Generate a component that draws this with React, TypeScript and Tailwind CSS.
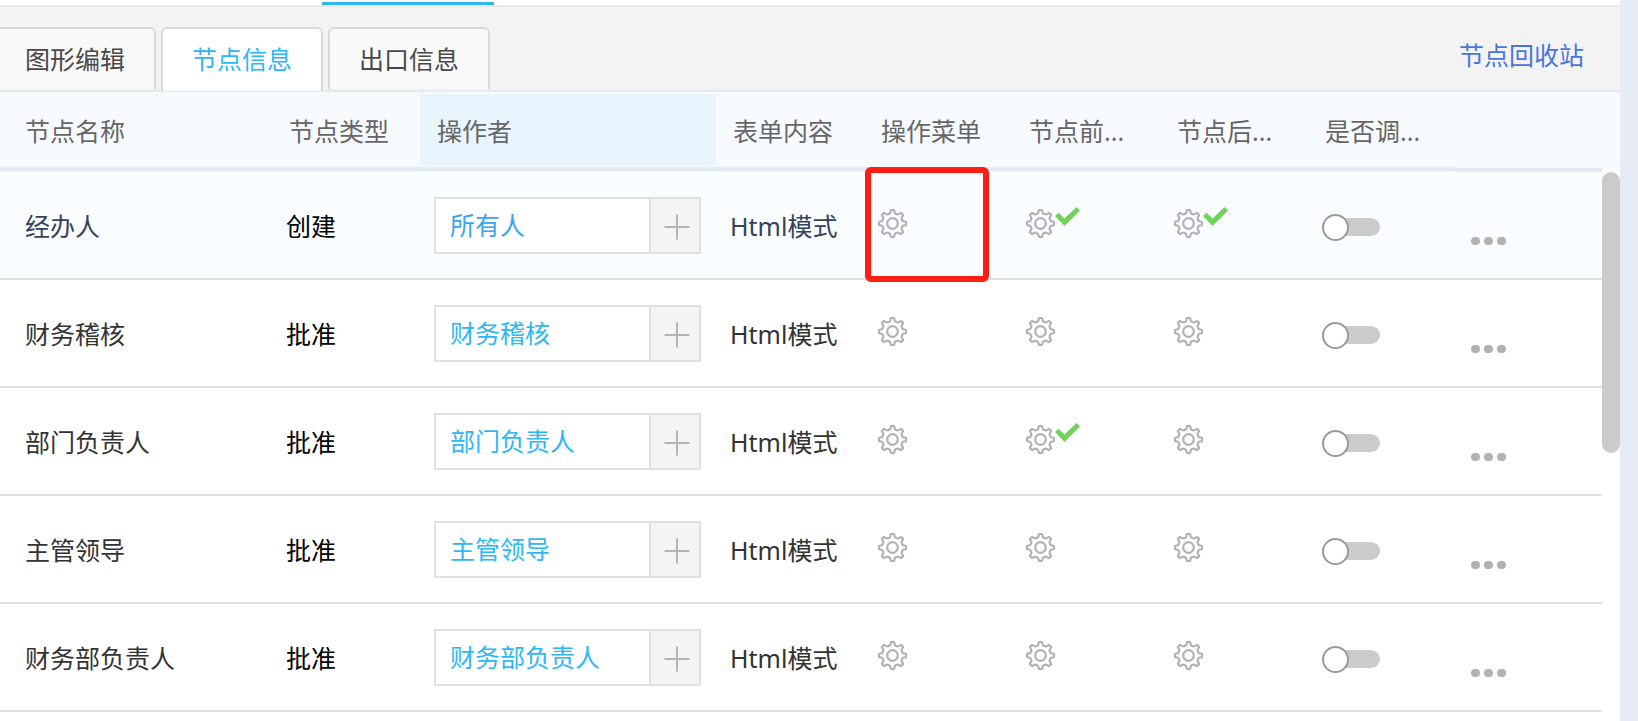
import React, { useState } from 'react';
import { clsx } from 'clsx';

interface FlowNode {
    id: string;
    name: string;
    type: string;
    operator: string;
    before: boolean;
    after: boolean;
}

const NODES: FlowNode[] = [
    { id: 'n1', name: '经办人', type: '创建', operator: '所有人', before: true, after: true },
    { id: 'n2', name: '财务稽核', type: '批准', operator: '财务稽核', before: false, after: false },
    { id: 'n3', name: '部门负责人', type: '批准', operator: '部门负责人', before: true, after: false },
    { id: 'n4', name: '主管领导', type: '批准', operator: '主管领导', before: false, after: false },
    { id: 'n5', name: '财务部负责人', type: '批准', operator: '财务部负责人', before: false, after: false },
];

const TABS = ['图形编辑', '节点信息', '出口信息'];

const COLUMNS = [
    { label: '节点名称', width: 'w-[272px]', pad: 'pl-[25px]' },
    { label: '节点类型', width: 'w-[148px]', pad: 'pl-[17px]' },
    { label: '操作者', width: 'w-[296px]', pad: 'pl-[17px]' },
    { label: '表单内容', width: 'w-[148px]', pad: 'pl-[17px]' },
    { label: '操作菜单', width: 'w-[148px]', pad: 'pl-[17px]' },
    { label: '节点前...', width: 'w-[148px]', pad: 'pl-[17px]' },
    { label: '节点后...', width: 'w-[148px]', pad: 'pl-[17px]' },
    { label: '是否调...', width: 'w-[147px]', pad: 'pl-[17px]' },
    { label: '', width: 'w-[147px]', pad: '' },
];

/* Outline of a cog with eight teeth, centred on 0,0 */
const gearPath = () => {
    const at = (x: number, y: number, deg: number) => {
        const a = (deg * Math.PI) / 180;
        return `${(x * Math.cos(a) - y * Math.sin(a)).toFixed(2)} ${(x * Math.sin(a) + y * Math.cos(a)).toFixed(2)}`;
    };
    let d = '';
    for (let deg = 0; deg < 360; deg += 45) {
        d += `${deg === 0 ? 'M' : 'L'}${at(-2.2, -11, deg)}`;
        d += `L${at(-1.7, -13, deg)}Q${at(-1.6, -13.6, deg)} ${at(-1, -13.6, deg)}`;
        d += `L${at(1, -13.6, deg)}Q${at(1.6, -13.6, deg)} ${at(1.7, -13, deg)}`;
        d += `L${at(2.2, -11, deg)}Q${at(2.4, -10, deg)} ${at(3.9, -9.4, deg)}`;
        d += `Q${at(4.7, -9, deg)} ${at(6.2, -9.3, deg)}`;
    }
    return `${d}Z`;
};

const GEAR = gearPath();

const GearButton: React.FC<{ label: string; checked?: boolean }> = ({ label, checked }) => (
    <button type="button" aria-label={label} className="flex items-start pb-1.5 pl-3.5 align-middle">
        <svg viewBox="-14.5 -14.5 29 29" className="mt-0.5 size-[29px]" fill="none" stroke="#b2b2b2" strokeWidth="2.2" strokeLinejoin="round">
            <path d={GEAR} />
            <circle r="5.3" />
        </svg>
        {checked && (
            <svg viewBox="0 0 25 19" className="h-[19px] w-[25px]" fill="#6fd357">
                <path d="M0 9 3.5 5.7 9.5 11.5 21.5 0 25 3.5 9.5 19Z" />
            </svg>
        )}
    </button>
);

const Toggle: React.FC<{ label: string }> = ({ label }) => (
    <input
        type="checkbox"
        role="switch"
        aria-label={label}
        className="relative mt-1 block h-[27px] w-[58px] cursor-pointer appearance-none before:absolute before:top-1 before:right-0 before:h-[18px] before:w-[50px] before:rounded-full before:bg-[#cbcbcb] after:absolute after:top-0 after:left-0 after:size-[27px] after:rounded-full after:border-2 after:border-[#999] after:bg-white checked:before:bg-[#2db7f5] checked:after:left-[31px]"
    />
);

const OperatorField: React.FC<{ value: string; label: string; active: boolean }> = ({ value, label, active }) => (
    <div className="flex h-[57px] w-[267px] border-2 border-[#e0e0e0] bg-white">
        <input
            type="text"
            aria-label={label}
            defaultValue={value}
            className={clsx('min-w-0 flex-1 pl-3.5 outline-none', active ? 'text-[#38a5ee]' : 'text-[#2db7f5]')}
        />
        <button type="button" aria-label="添加" className="flex w-[50px] items-center justify-center border-l-2 border-[#e0e0e0] bg-[#f4f4f4]">
            <svg viewBox="0 0 26 26" className="mt-1 ml-1 size-[26px]" stroke="#b4b4b4" strokeWidth="2">
                <path d="M13 0.5v25M0.5 13h25" />
            </svg>
        </button>
    </div>
);

const App: React.FC = () => {
    const [tab, setTab] = useState(1);

    return (
        <div className="flex min-h-screen bg-white font-['Noto_Sans','Noto_Sans_CJK_SC',sans-serif] text-[25px] leading-9 text-[#333]">
            <div className="min-w-0 flex-1">
                {/* Tail of the main navigation */}
                <div className="h-[7px] border-b-2 border-[#e9e9e9] pt-0.5">
                    <div className="ml-[322px] h-[3px] w-[172px] bg-[#2db7f5]" />
                </div>

                {/* Tabs */}
                <div className="flex h-[85px] items-end justify-between border-b-2 border-[#e9e9e9] bg-[#f3f3f3]">
                    <div role="tablist" className="-ml-1.5 flex items-start gap-[5px]">
                        {TABS.map((label, i) => (
                            <button
                                key={label}
                                type="button"
                                role="tab"
                                aria-selected={tab === i}
                                onClick={() => setTab(i)}
                                className={clsx(
                                    'w-[162px] rounded-t-md border-2 border-b-0 border-[#d9d9d9]',
                                    tab === i ? '-mb-px h-16 bg-white pb-0.5 text-[#2db7f5]' : 'h-[62px] bg-[#f9f9f9] text-[#484848]',
                                )}
                            >
                                {label}
                            </button>
                        ))}
                    </div>
                    <a href="#recycle" className="mr-9 mb-[17px] text-[#4a76dc]">节点回收站</a>
                </div>

                <div className="flex">
                    <table className="min-w-0 flex-1 table-fixed border-separate border-spacing-0 text-left">
                        <thead>
                            <tr className="h-20 bg-[#f7fbff]">
                                {COLUMNS.map((col, i) => (
                                    <th key={i} scope="col" className={clsx('p-0 align-top font-normal text-[#666]', col.width)}>
                                        <div className={clsx('border-b-4 border-[#e3ebf2] pt-0.5 pb-px', i === 8 ? 'h-20' : 'h-[79px]')}>
                                            <div className={clsx('flex h-[72px] items-center pt-0.5 whitespace-nowrap', col.pad, i === 2 && 'bg-[#e8f5ff]')}>
                                                {col.label}
                                            </div>
                                        </div>
                                    </th>
                                ))}
                            </tr>
                        </thead>
                        <tbody>
                            {NODES.map((node, i) => (
                                <tr
                                    key={node.id}
                                    className={clsx(
                                        'h-[108px] *:border-b-2 *:border-[#e0e0e0] *:p-0 *:align-middle',
                                        i === 0 ? 'bg-[#f9fdff] text-[#36425a]' : 'text-[#333]',
                                    )}
                                >
                                    <td><div className="pt-0.5 pl-[25px]">{node.name}</div></td>
                                    <td><div className="pt-0.5 pl-3.5 text-black">{node.type}</div></td>
                                    <td>
                                        <div className="pl-3.5">
                                            <OperatorField value={node.operator} label={`${node.name}操作者`} active={i === 0} />
                                        </div>
                                    </td>
                                    <td><div className="pt-0.5 pl-3.5 whitespace-nowrap">Html模式</div></td>
                                    <td className="relative">
                                        <GearButton label="操作菜单" />
                                        {i === 0 && (
                                            <div className="pointer-events-none absolute -top-[5px] left-px h-[115px] w-[124px] rounded-md border-6 border-[#ff1e12]" />
                                        )}
                                    </td>
                                    <td><GearButton label="节点前" checked={node.before} /></td>
                                    <td><GearButton label="节点后" checked={node.after} /></td>
                                    <td><div className="pl-3.5"><Toggle label={`${node.name}是否调整`} /></div></td>
                                    <td>
                                        <button type="button" aria-label="更多" className="mt-8 ml-4 flex gap-1">
                                            <span className="h-2 w-[9px] rounded-full bg-[#b2b2b2]" />
                                            <span className="h-2 w-[9px] rounded-full bg-[#b2b2b2]" />
                                            <span className="h-2 w-[9px] rounded-full bg-[#b2b2b2]" />
                                        </button>
                                    </td>
                                </tr>
                            ))}
                        </tbody>
                    </table>

                    {/* Scrollbar */}
                    <div className="w-[18px] shrink-0">
                        <div className="h-20 bg-[#f7fbff]" />
                        <div className="h-[281px] rounded-full bg-[#cbcbcb]" />
                    </div>
                </div>
            </div>
            <div className="w-[18px] shrink-0 bg-[#e7ebf5]" />
        </div>
    );
};

export default App;
